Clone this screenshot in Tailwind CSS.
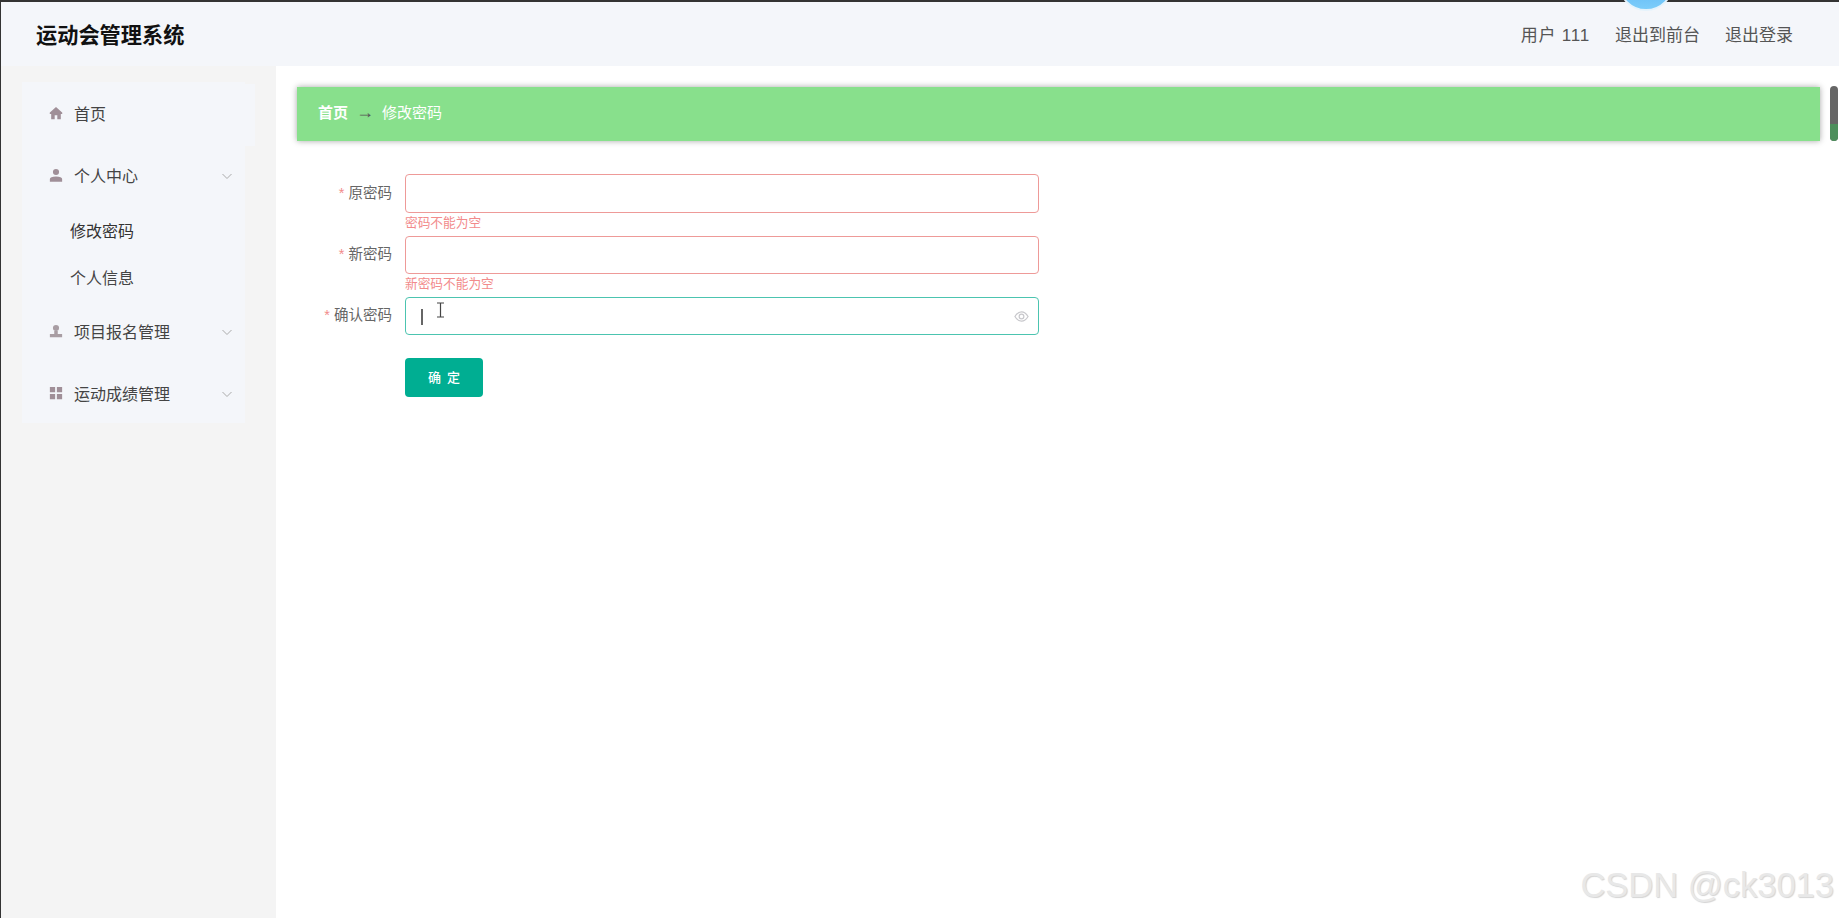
<!DOCTYPE html>
<html lang="zh-CN">
<head>
    <meta charset="UTF-8">
    <title>运动会管理系统</title>
    <script src="https://cdn.jsdelivr.net/npm/@tailwindcss/browser@4"></script>
</head>
<body class="h-[918px] w-[1839px] overflow-hidden bg-white font-['Liberation_Sans','Noto_Sans_CJK_SC',sans-serif]">
<div class="relative flex h-[918px] flex-col border-t-2 border-l border-[#333]">
    <!-- top bar -->
    <header class="flex h-[64px] shrink-0 items-center justify-between bg-[#f4f6fa] pt-[3px] pl-[35px] pr-[46px]">
        <span class="text-[21.200px] font-bold text-[#111]">运动会管理系统</span>
        <nav class="flex items-center gap-[25px] text-[17px] text-[#555]">
            <span class="tracking-[0.800px]">用户 111</span>
            <a href="#">退出到前台</a>
            <a href="#">退出登录</a>
        </nav>
    </header>
    <!-- avatar peeking in from the top -->
    <div class="absolute left-[1623px] top-[-2px] h-[12px] w-[44px] overflow-hidden">
        <div class="ml-[-6px] mt-[-45px] h-[56px] w-[56px] rounded-full border-2 border-[#e4f3fc] bg-gradient-to-b from-[#3d9ff0] to-[#7ccdfa]"></div>
    </div>

    <div class="flex min-h-0 flex-1">
        <!-- sidebar -->
        <aside class="w-[275px] shrink-0 bg-[#f4f4f4] pt-[16px] pl-[21px]">
            <ul class="h-[341px] w-[223px] bg-[#f4f6fa] pt-[2px] text-[16px] text-[#444]">
                <li class="flex h-[62px] w-[233px] items-center bg-[#f4f6fa] pl-[27px]">
                    <svg class="mr-[11px] h-[14px] w-[14px] -translate-y-[2px] text-[#a08f98]" viewBox="0 0 16 16" fill="currentColor"><path d="M8 1 1 7.500q-.5.500 0 1.500h1.500v6h4v-4.500h3V15h4V9H15q.5-1 0-1.500z"/></svg>
                    <span>首页</span>
                </li>
                <li class="flex h-[62px] items-center pl-[27px]">
                    <svg class="mr-[11px] h-[15px] w-[14px] -translate-y-[2px] text-[#a08f98]" viewBox="0 0 16 16" fill="currentColor"><circle cx="8" cy="4" r="3.500"/><path d="M1 15v-3c0-2 2.500-3 7-3s7 1 7 3v3z"/></svg>
                    <span>个人中心</span>
                    <svg class="ml-auto mr-[13px] h-[10px] w-[10px] -translate-y-[1px] text-[#aaa]" viewBox="0 0 10 10" fill="none" stroke="currentColor"><path d="M.5 3 5 7.500 9.500 3"/></svg>
                </li>
                <li class="flex h-[47px] items-center pl-[48px] text-[#333]">修改密码</li>
                <li class="flex h-[47px] items-center pl-[48px]">个人信息</li>
                <li class="flex h-[62px] items-center pl-[27px]">
                    <svg class="mr-[11px] h-[14px] w-[14px] -translate-y-[2px] text-[#a89da3]" viewBox="0 0 16 16" fill="currentColor"><circle cx="8" cy="4.500" r="3.500"/><path d="M6 8h4v3.500h5V15H1v-3.500h5z"/></svg>
                    <span>项目报名管理</span>
                    <svg class="ml-auto mr-[13px] h-[10px] w-[10px] -translate-y-[1px] text-[#aaa]" viewBox="0 0 10 10" fill="none" stroke="currentColor"><path d="M.5 3 5 7.500 9.500 3"/></svg>
                </li>
                <li class="flex h-[62px] items-center pl-[27px]">
                    <svg class="mr-[11px] h-[14px] w-[14px] -translate-y-[2px] text-[#a08f98]" viewBox="0 0 16 16" fill="currentColor"><path d="M1 1h6v6H1zM9 1h6v6H9zM1 9h6v6H1zM9 9h6v6H9z"/></svg>
                    <span>运动成绩管理</span>
                    <svg class="ml-auto mr-[13px] h-[10px] w-[10px] -translate-y-[1px] text-[#aaa]" viewBox="0 0 10 10" fill="none" stroke="currentColor"><path d="M.5 3 5 7.500 9.500 3"/></svg>
                </li>
            </ul>
        </aside>

        <!-- content -->
        <main class="relative flex-1 pt-[21px] pl-[21px] pr-[19px]">
            <div class="flex h-[54px] items-center bg-[#88e08c] pb-[1px] pl-[21px] text-[15px] text-white shadow-[0_0_6px_rgba(0,0,0,0.35)]">
                <span class="font-bold">首页</span>
                <span class="mx-[8px] -translate-y-[2px] text-[18px] leading-none text-[#555]">→</span>
                <span>修改密码</span>
            </div>

            <form class="mt-[33px] flex flex-col">
                <div class="flex items-center">
                    <label class="w-[108px] pr-[13px] text-right text-[14.500px] text-[#666]"><span class="mr-[4px] text-[#f28b8b]">*</span>原密码</label>
                    <input type="password" class="h-[39px] w-[634px] rounded-[4px] border border-[#ee9a98] bg-white">
                </div>
                <p class="ml-[108px] h-[23px] pt-[2px] text-[12.700px] leading-[16px] text-[#f28b8b]">密码不能为空</p>
                <div class="flex items-center">
                    <label class="w-[108px] pr-[13px] text-right text-[14.500px] text-[#666]"><span class="mr-[4px] text-[#f28b8b]">*</span>新密码</label>
                    <input type="password" class="h-[38px] w-[634px] rounded-[4px] border border-[#ee9a98] bg-white">
                </div>
                <p class="ml-[108px] h-[23px] pt-[2px] text-[12.700px] leading-[16px] text-[#f28b8b]">新密码不能为空</p>
                <div class="flex items-center">
                    <label class="w-[108px] pr-[13px] text-right text-[14.500px] text-[#666]"><span class="mr-[4px] text-[#f28b8b]">*</span>确认密码</label>
                    <div class="relative flex h-[38px] w-[634px] items-center rounded-[4px] border border-[#4cc4b0] pl-[15px]">
                        <span class="h-[16px] w-[2px] translate-y-[1px] bg-[#666]"></span>
                        <!-- text cursor -->
                        <svg class="absolute left-[30px] top-[4px] h-[16px] w-[9px] text-[#444]" viewBox="0 0 9 16" fill="none" stroke="currentColor" stroke-width="1.200"><path d="M1 1h7M4.500 1v14M1 15h7"/></svg>
                        <svg class="ml-auto mr-[9px] h-[15px] w-[15px] text-[#c8c8cc]" viewBox="0 0 16 16" fill="none" stroke="currentColor" stroke-width="1.300"><path d="M1 8c2-3.300 4.300-5 7-5s5 1.700 7 5c-2 3.300-4.300 5-7 5s-5-1.700-7-5z"/><circle cx="8" cy="8" r="2.500"/></svg>
                    </div>
                </div>
                <button type="button" class="ml-[108px] mt-[23px] h-[39px] w-[78px] rounded-[4px] bg-[#00ae92] pl-[6px] text-[13px] font-medium tracking-[6px] text-white">确定</button>
            </form>

            <!-- scrollbar thumb -->
            <div class="absolute right-[1px] top-[20px] flex h-[55px] w-[8px] flex-col justify-end overflow-hidden rounded-full bg-[#666]">
                <div class="h-[17px] bg-[#4d8f5c]"></div>
            </div>
        </main>
    </div>
    <!-- watermark -->
    <span class="absolute bottom-[16px] right-[5px] text-[34.500px] leading-none text-[#e8e8e8] [text-shadow:1px_1px_1px_#d4d4d4]">CSDN @ck3013</span>
</div>
</body>
</html>
